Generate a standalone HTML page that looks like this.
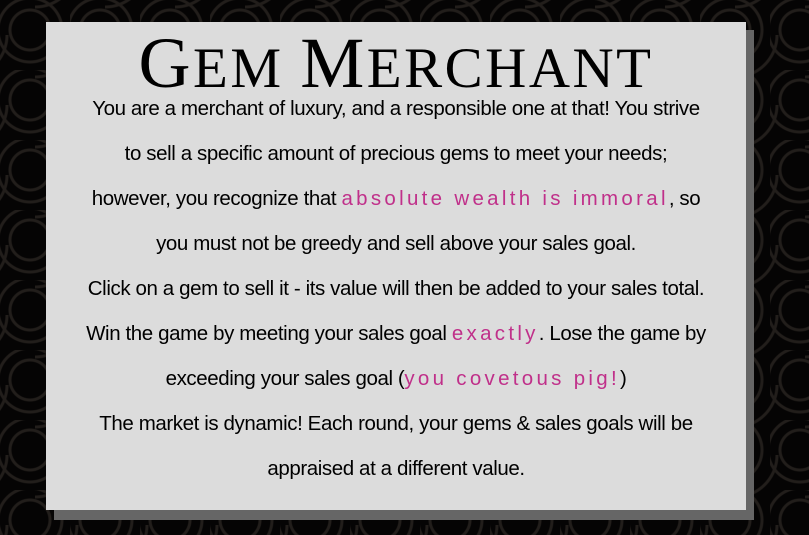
<!DOCTYPE html>
<html><head><style>
html,body{margin:0;padding:0;width:809px;height:535px;overflow:hidden}
body{background:#050404;position:relative;font-family:"Liberation Sans",sans-serif}
.bg{position:absolute;inset:0;background:
radial-gradient(circle at 30px 30px,transparent 18px,#221e1b 19px,#221e1b 21px,transparent 22px,transparent 30px,#221e1b 31px,#221e1b 33px,transparent 34px),
radial-gradient(circle at 0 0,transparent 40px,#221e1b 41px,#221e1b 43px,transparent 44px);
background-size:70px 70px,70px 70px;background-position:0 0,35px 35px}
.shadow{position:absolute;left:54px;top:30px;width:700px;height:490px;background:#666}
.box{position:absolute;left:46px;top:22px;width:700px;height:488px;background:#dcdcdc;text-align:center;color:#000}
h1{margin:0;position:absolute;left:0;right:0;top:0;height:70px;font-family:"Liberation Serif",serif;font-weight:normal;font-size:57px;line-height:82px;letter-spacing:2.5px;white-space:nowrap}
h1 b{font-weight:normal;font-size:72px}
.t{position:absolute;left:0;right:0;top:64px;font-size:20.5px;line-height:45px;letter-spacing:-0.4px;white-space:nowrap}
.p{color:#c0308a;letter-spacing:3.3px;font-size:20.5px}
</style></head><body>
<div class="bg"></div>
<div class="shadow"></div>
<div class="box">
<h1><b>G</b>EM <b>M</b>ERCHANT</h1>
<div class="t">You are a merchant of luxury, and a responsible one at that! You strive<br>to sell a specific amount of precious gems to meet your needs;<br>however, you recognize that <span class="p">absolute wealth is immoral</span>, so<br>you must not be greedy and sell above your sales goal.<br>Click on a gem to sell it - its value will then be added to your sales total.<br>Win the game by meeting your sales goal <span class="p">exactly</span>. Lose the game by<br>exceeding your sales goal (<span class="p">you covetous pig!</span>)<br>The market is dynamic! Each round, your gems &amp; sales goals will be<br>appraised at a different value.</div>
</div>
</body></html>
